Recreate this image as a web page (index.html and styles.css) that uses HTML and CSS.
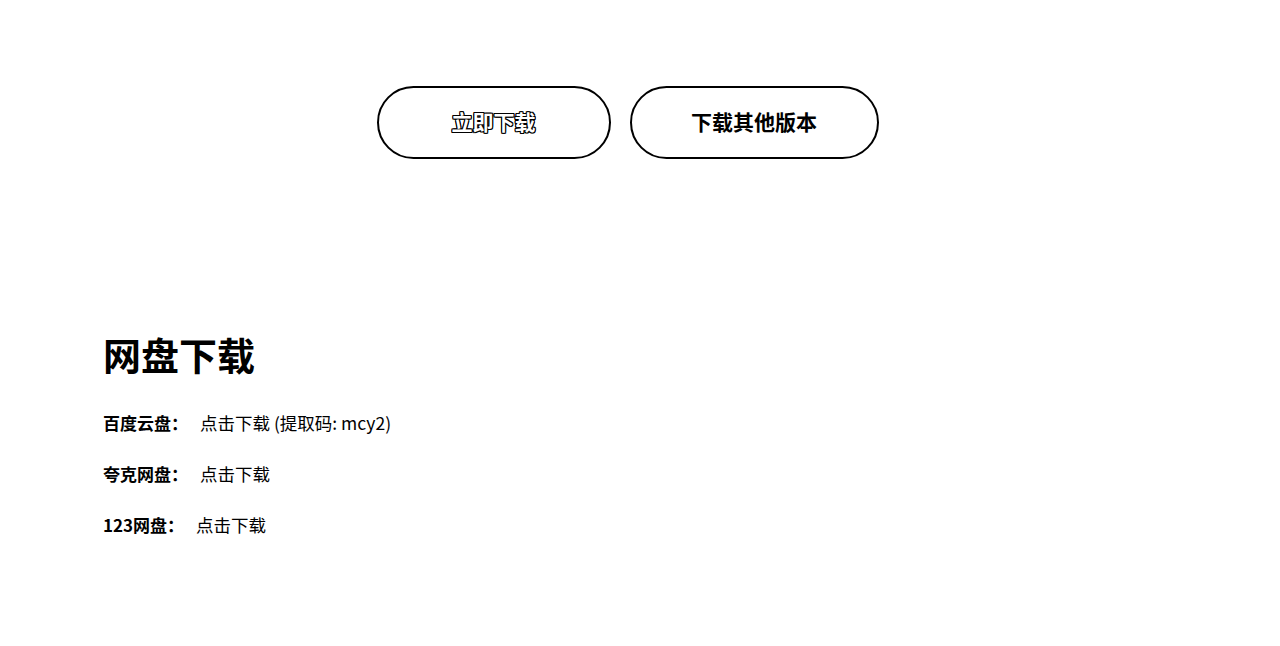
FILE: index.html
```html
<!DOCTYPE html>
<html lang="zh-CN">
<head>
<meta charset="utf-8">
<title>下载</title>
<link rel="stylesheet" href="styles.css">
</head>
<body>
<div class="page">
  <div class="actions">
    <a class="btn btn-primary" href="#">立即下载</a>
    <a class="btn btn-secondary" href="#">下载其他版本</a>
  </div>
  <section class="netdisk">
    <h2 class="title">网盘下载</h2>
    <p class="row"><span class="label">百度云盘：</span><a class="link" href="#">点击下载 (提取码: mcy2)</a></p>
    <p class="row"><span class="label">夸克网盘：</span><a class="link" href="#">点击下载</a></p>
    <p class="row"><span class="label">123网盘：</span><a class="link" href="#">点击下载</a></p>
  </section>
</div>
</body>
</html>
```
FILE: styles.css
```css
html, body {
  margin: 0;
  padding: 0;
  background: #fff;
}
body {
  font-family: "Noto Sans CJK SC", "Noto Sans", sans-serif;
  color: #000;
}
.page {
  width: 1049px;
  margin-left: 103px;
  padding-top: 86px;
}
.actions {
  display: flex;
  justify-content: center;
  gap: 19px;
}
.btn {
  box-sizing: border-box;
  height: 73px;
  display: flex;
  align-items: center;
  justify-content: center;
  padding-bottom: 3px;
  border: 2px solid #000;
  border-radius: 999px;
  font-size: 21px;
  font-weight: 700;
  text-decoration: none;
  color: #000;
  background: #fff;
}
.btn-primary {
  width: 234px;
  color: #fff;
  text-shadow: 1px 0 0 #000, -1px 0 0 #000, 0 1px 0 #000, 0 -1px 0 #000, 1px 1px 0 #000, -1px -1px 0 #000, 1px -1px 0 #000, -1px 1px 0 #000;
}
.btn-secondary {
  width: 249px;
}
.netdisk {
  margin-top: 170px;
}
.title {
  margin: 0 0 31px;
  font-size: 38px;
  font-weight: 700;
  line-height: 50px;
}
.row {
  margin: 0;
  height: 51px;
  font-size: 17px;
  line-height: 26px;
  display: flex;
}
.label {
  font-weight: 700;
  margin-right: 12px;
}
.link {
  color: #000;
  text-decoration: none;
  font-size: 17.5px;
}
```
